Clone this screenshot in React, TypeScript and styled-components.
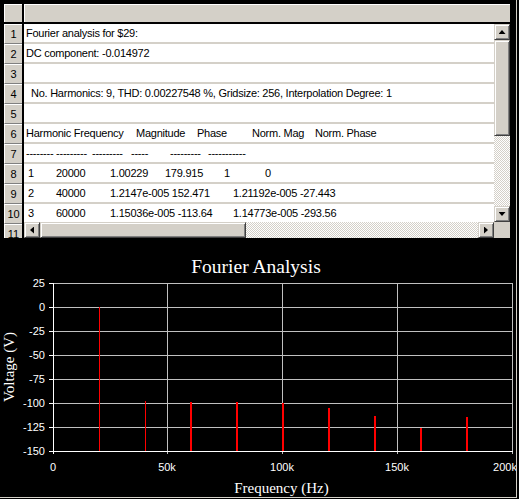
import React from "react";
import styled, { createGlobalStyle } from "styled-components";

const Global = createGlobalStyle`
  html, body { margin: 0; padding: 0; background: #000; }
  body { width: 519px; height: 499px; overflow: hidden; font-family: "Liberation Sans", Arial, sans-serif; }
`;

const Frame = styled.div`
  width: 516px;
  height: 497px;
  border-right: 1px solid #d4d0c8;
  border-bottom: 1px solid #d4d0c8;
  background: #000;
  display: flex;
  flex-direction: column;
  overflow: hidden;
`;

const Sheet = styled.div`
  margin: 4px 0 0 4px;
  width: 506px;
  height: 234px;
  flex: none;
  display: flex;
  flex-direction: column;
  font-size: 11px;
  letter-spacing: -0.25px;
  color: #000;
`;

const HeaderRow = styled.div`
  display: flex;
  height: 18px;
  flex: none;
  border-bottom: 2px solid #000;
`;

const Corner = styled.div`
  width: 18px;
  flex: none;
  border-right: 2px solid #000;
  background: #d4d0c8;
  box-shadow: inset 1px 1px #fff;
`;

const HeaderFill = styled.div`
  flex: 1;
  background: #d4d0c8;
  box-shadow: inset 1px 1px #fff;
`;

const Body = styled.div`
  display: flex;
  flex: 1;
  min-height: 0;
`;

const LabelCol = styled.div`
  width: 18px;
  flex: none;
  border-right: 2px solid #000;
  display: flex;
  flex-direction: column;
  overflow: hidden;
  background: #d4d0c8;
`;

const RowLabel = styled.div`
  flex: none;
  height: 20px;
  box-sizing: border-box;
  background: #d4d0c8;
  border-top: 1px solid #fff;
  border-left: 1px solid #fff;
  border-bottom: 1px solid #808080;
  padding-bottom: 1px;
  display: flex;
  align-items: center;
  justify-content: center;
  letter-spacing: 0;
`;

const Main = styled.div`
  flex: 1;
  min-width: 0;
  display: flex;
  flex-direction: column;
`;

const Upper = styled.div`
  display: flex;
  height: 198px;
  flex: none;
`;

const Cells = styled.div`
  flex: 1;
  overflow: hidden;
  background: #d4d0c8;
`;

const Row = styled.div<{ $pad: number }>`
  height: 18px;
  margin-bottom: 2px;
  background: #fff;
  display: flex;
  align-items: center;
  white-space: nowrap;
  padding-left: ${(p) => p.$pad}px;
`;

const Seg = styled.span<{ $w?: number }>`
  flex: none;
  ${(p) => (p.$w ? `width: ${p.$w}px;` : "")}
`;

const VScroll = styled.div`
  width: 16px;
  flex: none;
  display: flex;
  flex-direction: column;
`;

const HScrollRow = styled.div`
  display: flex;
  height: 16px;
  flex: none;
`;

const HScroll = styled.div`
  flex: 1;
  display: flex;
`;

const ScrollPart = styled.div<{ $len?: number }>`
  flex: none;
  box-sizing: border-box;
  width: 16px;
  height: 16px;
  background: #d4d0c8;
  border: 1px solid;
  border-color: #d4d0c8 #404040 #404040 #d4d0c8;
  box-shadow: inset 1px 1px #fff, inset -1px -1px #808080;
  display: flex;
  align-items: center;
  justify-content: center;
`;

const VThumb = styled(ScrollPart)<{ $len: number }>`
  height: ${(p) => p.$len}px;
`;

const HThumb = styled(ScrollPart)<{ $len: number }>`
  width: ${(p) => p.$len}px;
`;

const Track = styled.div`
  flex: 1;
  background-image: conic-gradient(#fff 25%, #d4d0c8 0 50%, #fff 0 75%, #d4d0c8 0);
  background-size: 2px 2px;
`;

const CornerBox = styled.div`
  width: 16px;
  height: 16px;
  flex: none;
  background: #d4d0c8;
`;

const Arrow = styled.span<{ $dir: "up" | "down" | "left" | "right" }>`
  display: block;
  background: #000;
  width: ${(p) => (p.$dir === "up" || p.$dir === "down" ? 7 : 4)}px;
  height: ${(p) => (p.$dir === "up" || p.$dir === "down" ? 4 : 7)}px;
  clip-path: ${(p) =>
    p.$dir === "up"
      ? "polygon(50% 0, 100% 100%, 0 100%)"
      : p.$dir === "down"
      ? "polygon(0 0, 100% 0, 50% 100%)"
      : p.$dir === "left"
      ? "polygon(0 50%, 100% 0, 100% 100%)"
      : "polygon(0 0, 100% 50%, 0 100%)"};
`;

const ChartBox = styled.div`
  flex: 1;
  min-height: 0;
`;

const ChartSvg = styled.svg`
  display: block;
`;

type Seg = [number, string];
const CELL_X = 24;

const rows: Seg[][] = [
  [[26, "Fourier analysis for $29:"]],
  [[26, "DC component: -0.014972"]],
  [],
  [[31, "No. Harmonics: 9, THD: 0.00227548 %, Gridsize: 256, Interpolation Degree: 1"]],
  [],
  [
    [26, "Harmonic Frequency"],
    [136, "Magnitude"],
    [197, "Phase"],
    [252, "Norm. Mag"],
    [315, "Norm. Phase"],
  ],
  [
    [26, "-------- ---------"],
    [92, "---------"],
    [131, "-----"],
    [170, "---------"],
    [208, "-----------"],
  ],
  [
    [28, "1"],
    [56, "20000"],
    [110, "1.00229"],
    [165, "179.915"],
    [224, "1"],
    [265, "0"],
  ],
  [
    [28, "2"],
    [56, "40000"],
    [110, "1.2147e-005 152.471"],
    [233, "1.21192e-005 -27.443"],
  ],
  [
    [28, "3"],
    [56, "60000"],
    [110, "1.15036e-005 -113.64"],
    [233, "1.14773e-005 -293.56"],
  ],
];

const yGrid = [283, 307, 331, 355, 379, 403, 427, 451];
const yLabels = ["25", "0", "-25", "-50", "-75", "-100", "-125", "-150"];
const xGrid = [53, 167, 282, 397, 512];
const xLabels: [number, string][] = [
  [53, "0"],
  [167, "50k"],
  [282, "100k"],
  [397, "150k"],
  [505, "200k"],
];
const bars: [number, number, number][] = [
  [99, 307, 1],
  [145, 401, 1],
  [190, 402, 2],
  [236, 402, 2],
  [282, 403, 2],
  [328, 408, 2],
  [374, 416, 2],
  [420, 428, 2],
  [466, 417, 2],
];

const GRID = "#c0c0c0";
const sans = '"Liberation Sans", Arial, sans-serif';
const serif = '"Liberation Serif", "Times New Roman", serif';

function Chart() {
  return (
    <ChartSvg width={516} height={259} viewBox="0 0 516 259">
      <g transform="translate(0,-238)">
        <text x={256} y={273} fill="#fff" fontFamily={serif} fontSize={19.5} textAnchor="middle">
          Fourier Analysis
        </text>
        {yGrid.slice(0, -1).map((y) => (
          <line key={"h" + y} x1={53} x2={513} y1={y + 0.5} y2={y + 0.5} stroke={GRID} strokeWidth={1} />
        ))}
        {xGrid.slice(1).map((x) => (
          <line key={"v" + x} x1={x + 0.5} x2={x + 0.5} y1={283} y2={454} stroke={GRID} strokeWidth={1} />
        ))}
        {yGrid.map((y) => (
          <line key={"t" + y} x1={49} x2={53} y1={y + 0.5} y2={y + 0.5} stroke="#fff" strokeWidth={1} />
        ))}
        <line x1={53.5} x2={53.5} y1={283} y2={454} stroke="#fff" strokeWidth={1} />
        <line x1={53} x2={513} y1={451.5} y2={451.5} stroke="#fff" strokeWidth={1} />
        {bars.map(([x, top, w]) => (
          <rect key={"b" + x} x={x} y={top} width={w} height={451 - top} fill="#ff0000" />
        ))}
        {yGrid.map((y, i) => (
          <text key={"yl" + y} x={45} y={y + 4} fill="#fff" fontFamily={sans} fontSize={11} textAnchor="end">
            {yLabels[i]}
          </text>
        ))}
        {xLabels.map(([x, t]) => (
          <text key={"xl" + t} x={x} y={471} fill="#fff" fontFamily={sans} fontSize={11} textAnchor="middle">
            {t}
          </text>
        ))}
        <text x={281.5} y={493} fill="#fff" fontFamily={serif} fontSize={15} textAnchor="middle">
          Frequency (Hz)
        </text>
        <text
          transform="translate(14,367) rotate(-90)"
          fill="#fff"
          fontFamily={serif}
          fontSize={15}
          textAnchor="middle"
        >
          Voltage (V)
        </text>
      </g>
    </ChartSvg>
  );
}

function SheetRow({ segs }: { segs: Seg[] }) {
  const pad = segs.length ? segs[0][0] - CELL_X : 0;
  return (
    <Row $pad={pad}>
      {segs.map(([x, t], i) => (
        <Seg key={i} $w={i < segs.length - 1 ? segs[i + 1][0] - x : undefined}>
          {t}
        </Seg>
      ))}
    </Row>
  );
}

export default function App() {
  return (
    <>
      <Global />
      <Frame>
        <Sheet>
          <HeaderRow>
            <Corner />
            <HeaderFill />
          </HeaderRow>
          <Body>
            <LabelCol>
              {Array.from({ length: 11 }, (_, i) => (
                <RowLabel key={i}>{i + 1}</RowLabel>
              ))}
            </LabelCol>
            <Main>
              <Upper>
                <Cells>
                  {rows.map((segs, i) => (
                    <SheetRow key={i} segs={segs} />
                  ))}
                </Cells>
                <VScroll>
                  <ScrollPart>
                    <Arrow $dir="up" />
                  </ScrollPart>
                  <VThumb $len={96} />
                  <Track />
                  <ScrollPart>
                    <Arrow $dir="down" />
                  </ScrollPart>
                </VScroll>
              </Upper>
              <HScrollRow>
                <HScroll>
                  <ScrollPart>
                    <Arrow $dir="left" />
                  </ScrollPart>
                  <HThumb $len={206} />
                  <Track />
                  <ScrollPart>
                    <Arrow $dir="right" />
                  </ScrollPart>
                </HScroll>
                <CornerBox />
              </HScrollRow>
            </Main>
          </Body>
        </Sheet>
        <ChartBox>
          <Chart />
        </ChartBox>
      </Frame>
    </>
  );
}
